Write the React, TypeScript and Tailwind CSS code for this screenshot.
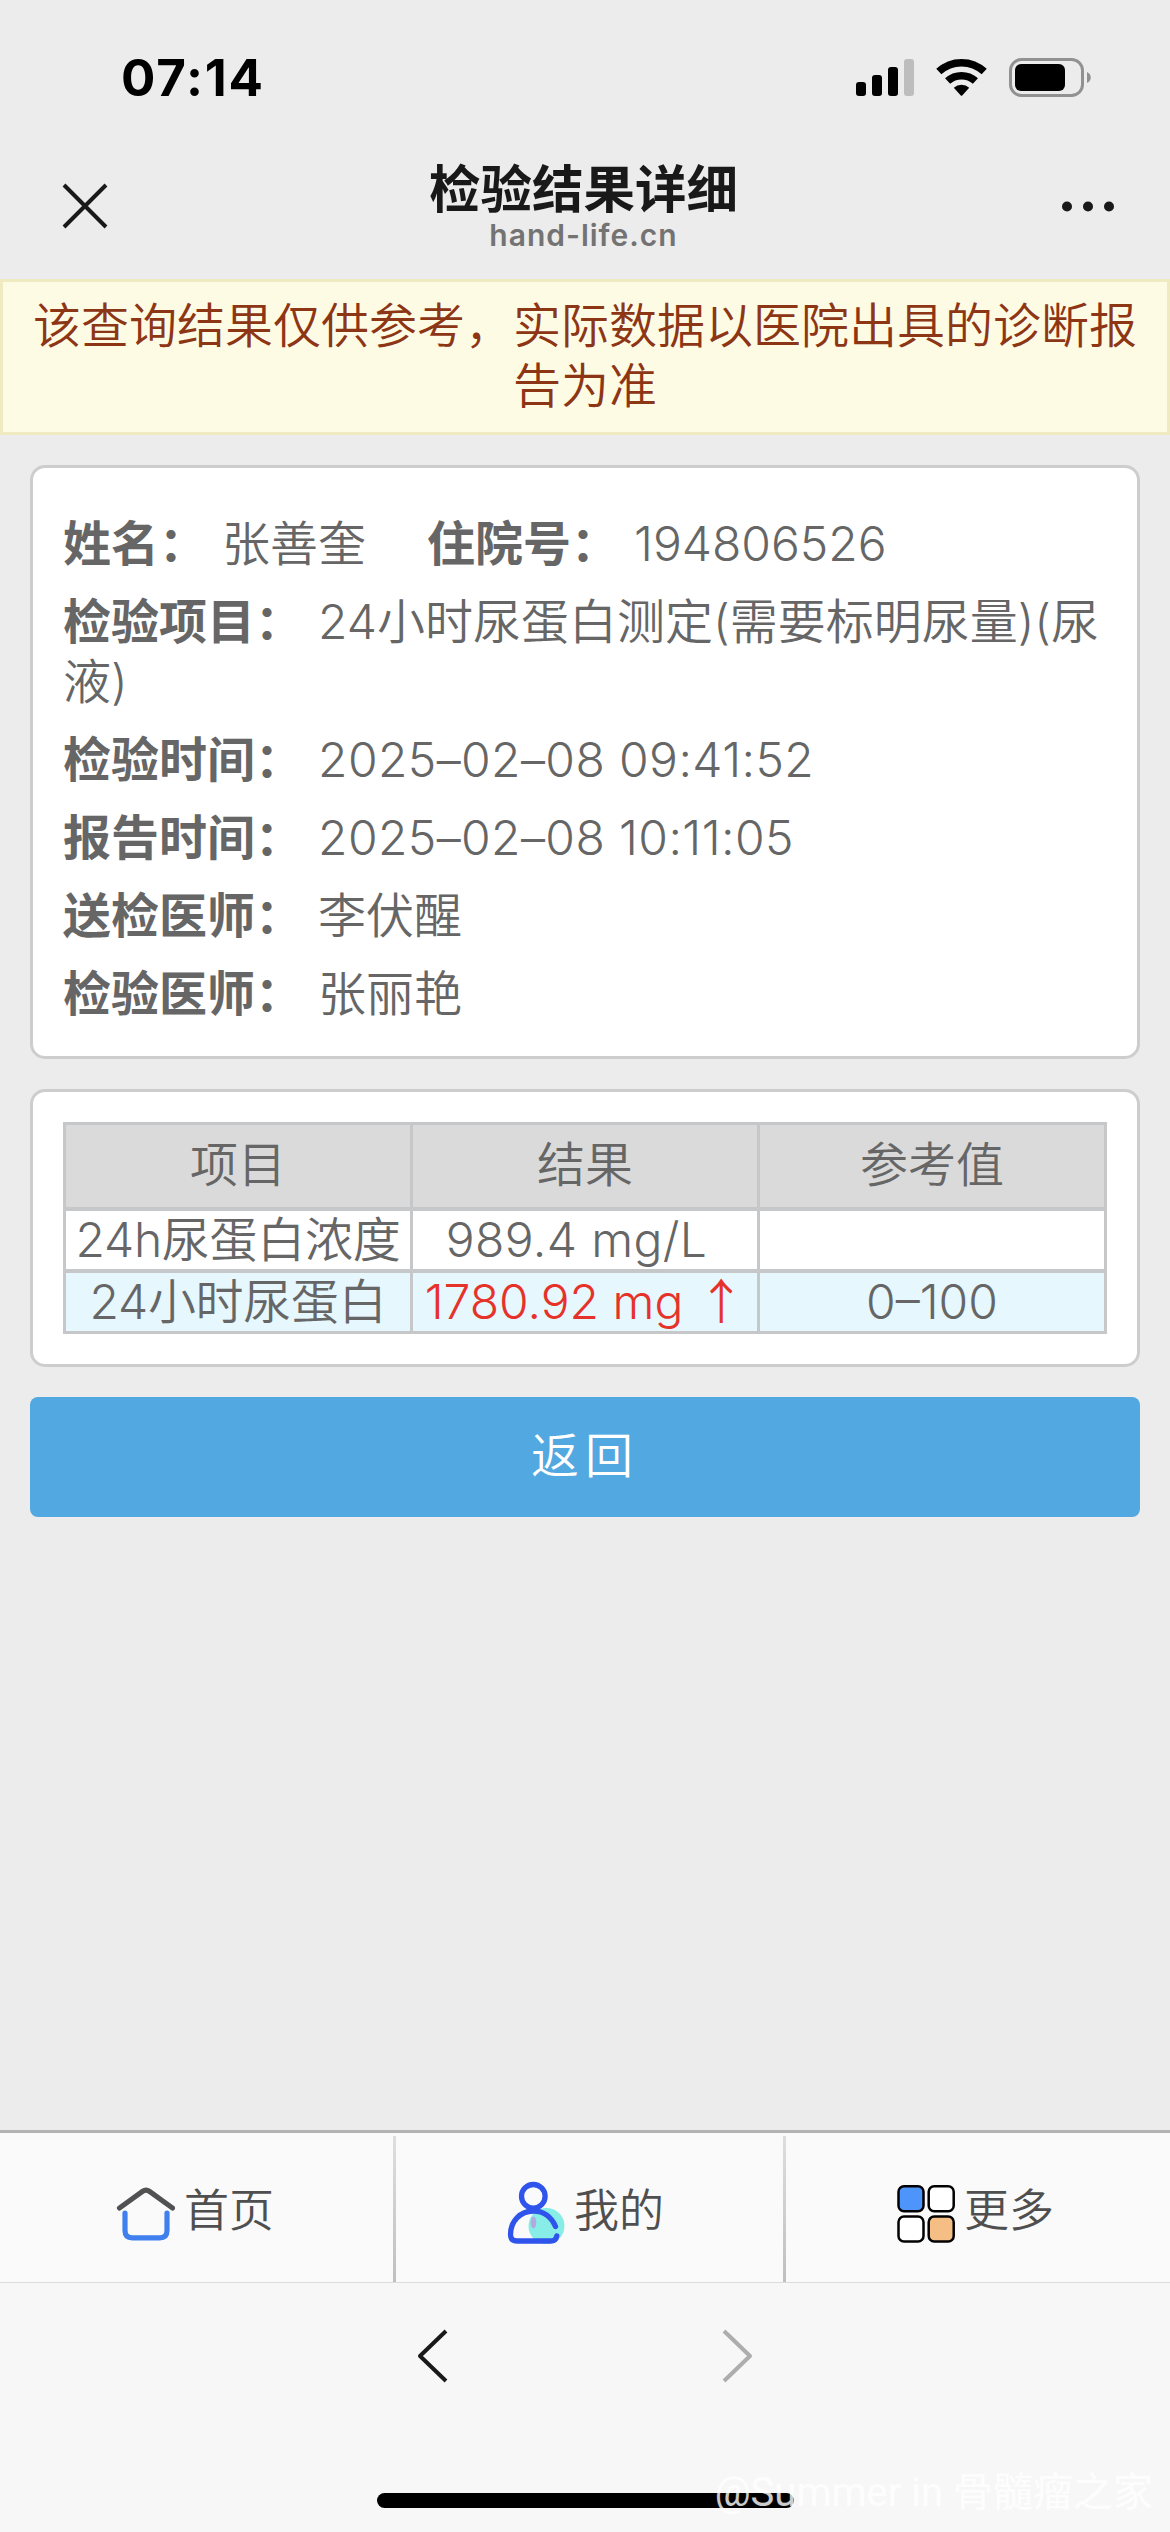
import React from 'react';

interface InfoRow {
  label: string;
  value: string;
  isTime?: boolean;
}

interface ResultRow {
  name: string;
  value: string;
  flag: string;
  reference: string;
}

const infoRows: InfoRow[] = [
  { label: '检验项目：', value: '24小时尿蛋白测定(需要标明尿量)(尿液)' },
  { label: '检验时间：', value: '2025–02–08 09:41:52', isTime: true },
  { label: '报告时间：', value: '2025–02–08 10:11:05', isTime: true },
  { label: '送检医师：', value: '李伏醒' },
  { label: '检验医师：', value: '张丽艳' },
];

const results: ResultRow[] = [
  { name: '24h尿蛋白浓度', value: '989.4 mg/L', flag: '', reference: '' },
  { name: '24小时尿蛋白', value: '1780.92 mg', flag: '↑', reference: '0–100' },
];

const StatusBar: React.FC = () => (
  <div className="h-[138px] shrink-0 flex items-start justify-between pl-[121px] pr-[78px]">
    <span className="mt-[48px] text-[51px] leading-[60px] tracking-[1.8px] font-bold text-black">07:14</span>
    <svg className="mt-[56px]" width="238" height="44" viewBox="0 0 238 44">
      <rect x="2" y="26" width="10" height="14" rx="3" fill="#000" />
      <rect x="18" y="19" width="10" height="21" rx="3" fill="#000" />
      <rect x="34" y="11" width="10" height="29" rx="3" fill="#000" />
      <rect x="50" y="3" width="10" height="37" rx="3" fill="#bdbdbd" />
      <g fill="none" stroke="#000" strokeWidth="7.5">
        <path d="M84.800 15.600a33.300 33.300 0 0 1 45.400 0" />
        <path d="M93.600 25.100a20.400 20.400 0 0 1 27.800 0" />
      </g>
      <path d="M99.800 31.800a11.300 11.300 0 0 1 15.400 0l-7 7.700q-.7.700-1.400 0z" fill="#000" />
      <rect x="156.500" y="3.500" width="72" height="36" rx="11" fill="none" stroke="#919191" strokeWidth="3" />
      <rect x="161" y="8" width="50" height="27" rx="6" fill="#000" />
      <path d="M233 16c5 2 5 9 0 11z" fill="#919191" />
    </svg>
  </div>
);

const Header: React.FC = () => (
  <div className="h-[141px] shrink-0 flex items-start justify-between pl-[61px] pr-[54px]">
    <button className="mt-[44px] w-[100px]">
      <svg width="48" height="48" viewBox="0 0 48 48" fill="none" stroke="#191919" strokeWidth="4">
        <path d="M3 3l42 42M45 3L3 45" />
      </svg>
    </button>
    <div className="flex flex-col items-center">
      <h1 className="mt-[21px] text-[51.5px] leading-[60px] font-semibold text-[#191919]">检验结果详细</h1>
      <span className="-mt-[2px] text-[30px] leading-[36px] tracking-[1px] font-semibold text-[#737373]">hand-life.cn</span>
    </div>
    <button className="mt-[63px] w-[110px] flex justify-end">
      <svg width="56" height="11" viewBox="0 0 56 11" fill="#191919">
        <circle cx="7" cy="5.500" r="5" />
        <circle cx="28" cy="5.500" r="5" />
        <circle cx="49" cy="5.500" r="5" />
      </svg>
    </button>
  </div>
);

const Label: React.FC<{ children: React.ReactNode }> = ({ children }) => (
  <b className="font-bold mr-[15px]">{children}</b>
);

const PatientCard: React.FC = () => (
  <div className="h-[594px] pt-[46px] px-[30px] bg-white border-[3px] border-[#cdcdcd] rounded-[15px] flex flex-col gap-[18px]">
    <div>
      <Label>姓名：</Label>
      张善奎
      <span className="ml-[61px]">
        <Label>住院号：</Label>
        194806526
      </span>
    </div>
    {infoRows.map((row) => (
      <div key={row.label}>
        <Label>{row.label}</Label>
        {row.isTime ? <span className="tracking-[0.4px]">{row.value}</span> : row.value}
      </div>
    ))}
  </div>
);

const ResultCard: React.FC = () => (
  <div className="h-[278px] p-[30px] bg-white border-[3px] border-[#cdcdcd] rounded-[15px]">
    <div className="grid grid-cols-3 gap-x-[3px] gap-y-[4px] p-[3px] bg-[#c6c7c8] text-center leading-[58px]">
      {['项目', '结果', '参考值'].map((title) => (
        <div key={title} className="h-[82px] pt-[11px] bg-[#dadada]">
          {title}
        </div>
      ))}
      {results.map((row) => (
        <React.Fragment key={row.name}>
          <div className={row.flag ? 'h-[58px] -tracking-[0.3px] bg-[#e6f7fe]' : 'h-[58px] -tracking-[0.3px] bg-white'}>
            {row.name}
          </div>
          <div
            className={
              row.flag
                ? 'h-[58px] flex justify-center bg-[#e6f7fe] text-[#e5332a]'
                : 'h-[58px] bg-white pr-[17px] tracking-[0.4px]'
            }
          >
            {row.value}
            {row.flag && (
              <span className="w-[48px] ml-[14px] -mt-[4px] font-['Noto_Sans_CJK_SC',sans-serif]">{row.flag}</span>
            )}
          </div>
          <div className={row.flag ? 'h-[58px] bg-[#e6f7fe]' : 'h-[58px] bg-white'}>{row.reference}</div>
        </React.Fragment>
      ))}
    </div>
  </div>
);

const HomeIcon: React.FC = () => (
  <svg width="60" height="64" viewBox="0 0 60 64" fill="none" strokeWidth="5.2" strokeLinecap="round">
    <path d="M4.500 28L27.500 11.300q3.500-2.500 7 0L57.500 28" stroke="#515154" />
    <path d="M10 33v17.500q0 7.300 7.300 7.300h27.400q7.300 0 7.300-7.300V33" stroke="#4080ee" />
  </svg>
);

const UserIcon: React.FC = () => (
  <svg width="60" height="64" viewBox="0 0 60 64" fill="none" strokeWidth="5.300" strokeLinecap="round">
    <circle cx="41.500" cy="46" r="18" fill="#87ede6" />
    <ellipse cx="28.500" cy="42.500" rx="2.800" ry="6" fill="#b3a9e2" />
    <g stroke="#2f54eb">
      <circle cx="28.300" cy="16.300" r="11.800" />
      <path d="M50.500 46.500C46.500 37 38.500 31 28.500 31 15 31 5.500 41.500 5.500 54.500q0 6.500 6.500 6.500h33.500q5.500 0 6.300-5.200" />
    </g>
  </svg>
);

const MoreIcon: React.FC = () => (
  <svg width="60" height="64" viewBox="0 0 60 64" stroke="#000" strokeWidth="2.500">
    <rect x="3.500" y="6.300" width="25" height="25" rx="5.500" fill="#4e95fb" />
    <rect x="33.700" y="6.300" width="25" height="25" rx="5.500" fill="#fff" />
    <rect x="3.500" y="36.500" width="25" height="25" rx="5.500" fill="#fff" />
    <rect x="33.700" y="36.500" width="25" height="25" rx="5.500" fill="#f5be85" />
  </svg>
);

interface TabProps {
  icon: React.ReactNode;
  label: string;
}

const Tab: React.FC<TabProps> = ({ icon, label }) => (
  <div className="flex items-start gap-[9px] pt-[47px]">
    {icon}
    <span className="mt-px text-[45px] leading-[60px] text-[#4f4f4f]">{label}</span>
  </div>
);

const Divider: React.FC = () => (
  <div className="w-[3px] mt-[3px] bg-linear-to-b from-[#dedede] to-[#bfbfbf]" />
);

const TabBar: React.FC = () => (
  <nav className="h-[153px] shrink-0 flex border-t-[3px] border-b border-t-[#b2b3b2] border-b-[#dcdcdc] bg-[#fafafa]">
    <div className="w-[393px] pl-[115px]">
      <Tab icon={<HomeIcon />} label="首页" />
    </div>
    <Divider />
    <div className="w-[387px] pl-[109px]">
      <Tab icon={<UserIcon />} label="我的" />
    </div>
    <Divider />
    <div className="w-[384px] pl-[109px]">
      <Tab icon={<MoreIcon />} label="更多" />
    </div>
  </nav>
);

const BrowserBar: React.FC = () => (
  <div className="relative h-[249px] shrink-0 bg-[#f7f7f7] flex flex-col items-center justify-between pt-[46px] pb-[24px]">
    <div className="w-[338px] flex justify-between">
      <svg width="32" height="54" viewBox="0 0 32 54" fill="none" stroke="#191919" strokeWidth="4">
        <path d="M30 2L4 27l26 25" strokeLinejoin="round" />
      </svg>
      <svg width="32" height="54" viewBox="0 0 32 54" fill="none" stroke="#adadad" strokeWidth="4">
        <path d="M2 2l26 25L2 52" strokeLinejoin="round" />
      </svg>
    </div>
    <div className="w-[417px] h-[15px] rounded-full bg-black" />
    <span className="absolute right-[17px] bottom-[15px] text-[40px] leading-[48px] whitespace-nowrap font-normal text-white/80 font-['Roboto','Noto_Sans_CJK_SC',sans-serif]">
      @Summer in 骨髓瘤之家
    </span>
  </div>
);

const App: React.FC = () => {
  return (
    <div className="w-[1170px] h-[2532px] overflow-hidden flex flex-col bg-[#ececec] font-['Inter','Noto_Sans_CJK_SC',sans-serif] font-[350] text-[48px] leading-[60px] text-[#666]">
      <StatusBar />
      <Header />

      <div className="h-[156px] shrink-0 pt-[14px] px-[30px] border-[3px] border-[#f0eac0] bg-[#fefbe4] text-center text-[#8d3615]">
        该查询结果仅供参考，实际数据以医院出具的诊断报告为准
      </div>

      <main className="flex-1 flex flex-col gap-[30px] p-[30px]">
        <PatientCard />
        <ResultCard />
        <button className="w-full h-[120px] pb-[2px] rounded-[8px] bg-[#52a8e0] tracking-[6px] text-white">
          返回
        </button>
      </main>

      <TabBar />
      <BrowserBar />
    </div>
  );
};

export default App;
